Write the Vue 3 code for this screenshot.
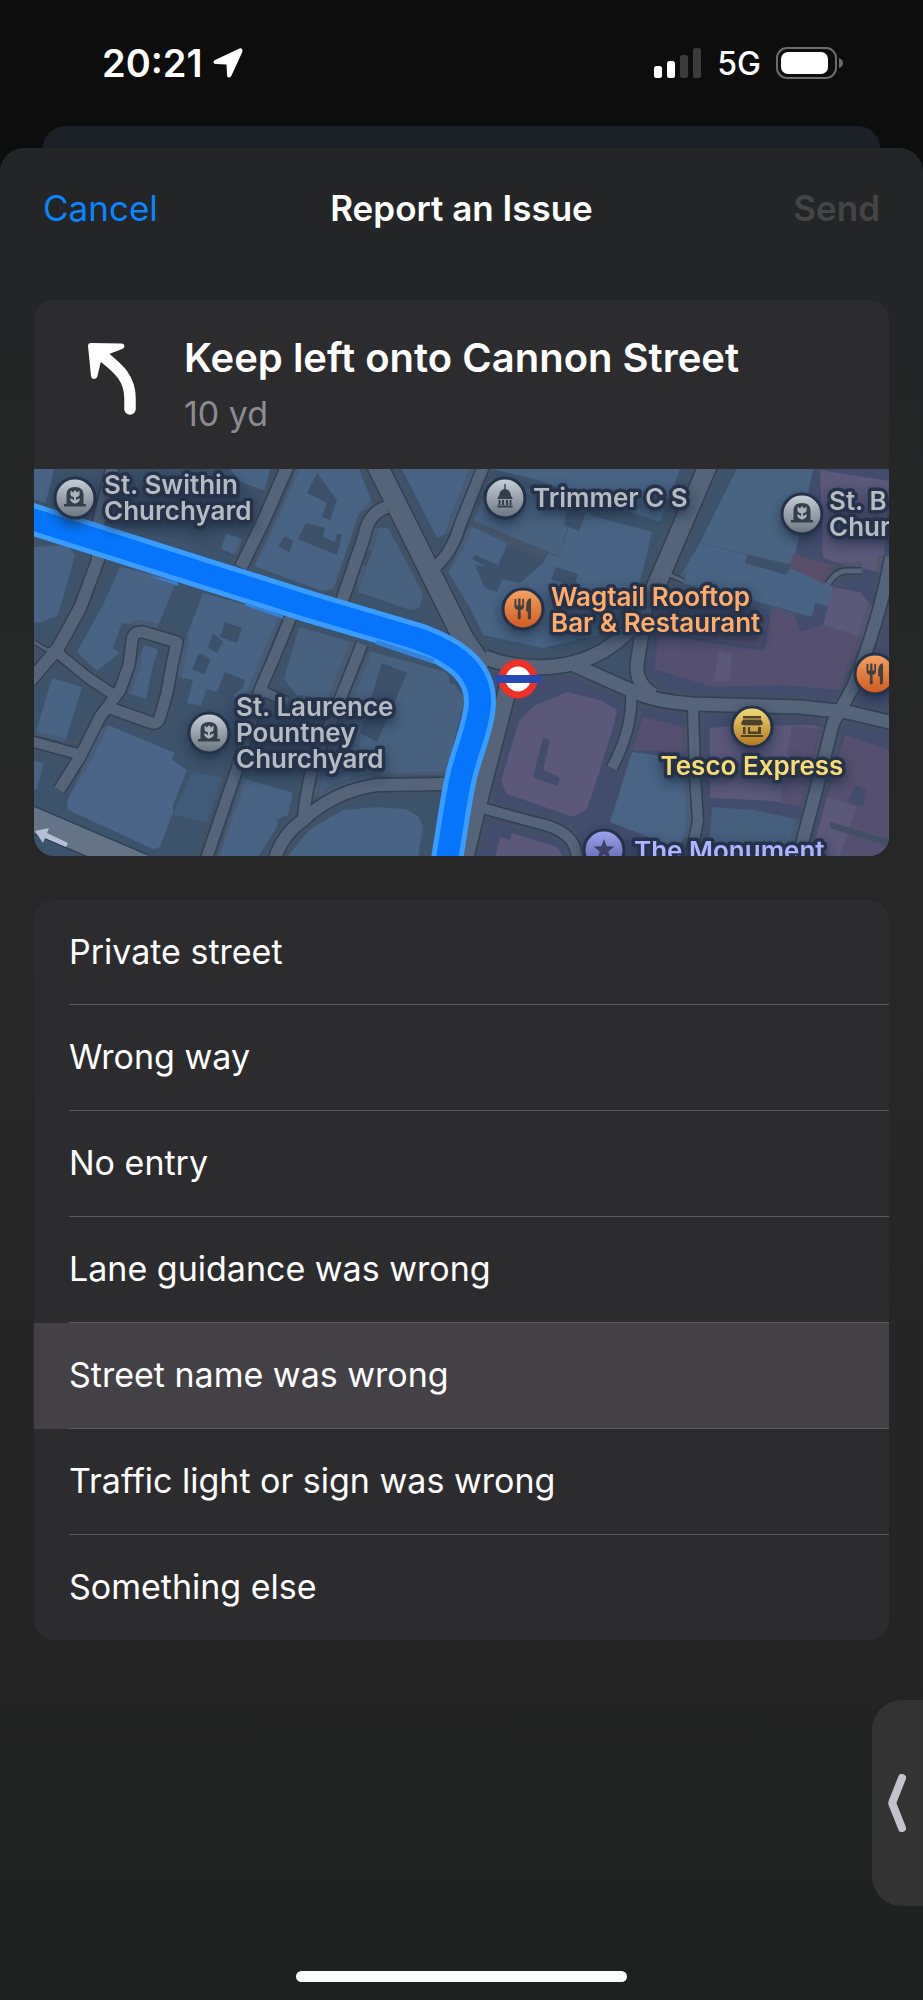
<template>
  <div class="screen">
    <header class="status-bar">
      <div class="status-left">
        <span class="time">20:21</span>
        <svg class="location" viewBox="0 0 30 30" aria-hidden="true">
          <path d="M26.500 .6 L2 12 Q0 13 .5 14.500 Q1 16 3 16 L13.500 16.500 L14 27 Q14 29.500 16 29.500 Q17.500 29.500 18.500 27.500 L29.300 4 Q30 1.500 28.800 .7 Q28 .1 26.500 .6 Z" fill="#fff" />
        </svg>
      </div>
      <div class="status-right">
        <svg class="signal" viewBox="0 0 48 30" aria-hidden="true">
          <rect x="0" y="18" width="8" height="12" rx="2.500" fill="#fff" />
          <rect x="13" y="13" width="8" height="17" rx="2.500" fill="#fff" />
          <rect x="26" y="7" width="8" height="23" rx="2.500" fill="#3b3b3b" />
          <rect x="39" y="0" width="8" height="30" rx="2.500" fill="#3b3b3b" />
        </svg>
        <span class="network">5G</span>
        <svg class="battery" viewBox="0 0 68 32" aria-hidden="true">
          <rect x="1" y="1" width="59" height="30" rx="10" fill="none" stroke="#6b6b6b" stroke-width="2" />
          <rect x="5" y="5" width="47" height="22" rx="7" fill="#fff" />
          <path d="M63 11 Q67 12.500 67 16 Q67 19.500 63 21 Z" fill="#6b6b6b" />
        </svg>
      </div>
    </header>

    <div class="back-sheet"></div>

    <main class="sheet">
      <nav class="nav">
        <button type="button" class="nav-button cancel">Cancel</button>
        <h1 class="title">Report an Issue</h1>
        <button type="button" class="nav-button send" disabled>Send</button>
      </nav>

      <section class="card">
        <div class="maneuver">
          <svg class="turn" viewBox="0 0 50 74" aria-hidden="true">
            <path d="M17 15 C29 25 43 35 43 56 V67" fill="none" stroke="#fff" stroke-width="11.500" stroke-linecap="round" />
            <path d="M4 1 L35 1.500 Q37.500 2 37.500 4.500 Q37 6 35 7 L21 12.500 L13.500 21 L10.500 34 Q9.500 37 7 37 Q4.500 37 4 34 L1 4 Q1 1 4 1 Z" fill="#fff" />
          </svg>
          <div>
            <h2 class="street">Keep left onto Cannon Street</h2>
            <p class="distance">10 yd</p>
          </div>
        </div>

        <svg class="map" viewBox="0 0 855 387" role="img" aria-label="Map of Cannon Street">
          <defs>
            <linearGradient id="silver" x1="0" y1="0" x2="0" y2="1">
              <stop offset="0" stop-color="#c9d1da" />
              <stop offset="1" stop-color="#68737f" />
            </linearGradient>
            <linearGradient id="orange" x1="0" y1="0" x2="0" y2="1">
              <stop offset="0" stop-color="#f4a365" />
              <stop offset="1" stop-color="#cf5820" />
            </linearGradient>
            <linearGradient id="gold" x1="0" y1="0" x2="0" y2="1">
              <stop offset="0" stop-color="#f2dc78" />
              <stop offset="1" stop-color="#ae751c" />
            </linearGradient>
            <linearGradient id="violet" x1="0" y1="0" x2="0" y2="1">
              <stop offset="0" stop-color="#9fa5ee" />
              <stop offset="1" stop-color="#555aa4" />
            </linearGradient>
            <filter id="glow" x="-30%" y="-60%" width="160%" height="240%">
              <feDropShadow dx="0" dy="5" stdDeviation="6" flood-color="#1c2b3f" flood-opacity=".7" />
            </filter>
            <g id="grave" fill="#363f49">
              <path d="M-8.500 6 V-3.500 Q-8.500 -11 0 -11 Q8.500 -11 8.500 -3.500 V6 H11 V8.500 H-11 V6 Z" />
              <path d="M-4.500 -7.500 L-2 -5.500 L0 -8 L2 -5.500 L4.500 -7.500 V-3 Q4 -1 1 -.7 V2.500 Q2 .5 5 .5 Q4.500 4.500 .5 5.500 H-.5 Q-4.500 4.500 -5 .5 Q-2 .5 -1 2.500 V-.7 Q-4 -1 -4.500 -3 Z" fill="#aab3bc" />
            </g>
            <g id="fork" fill="#42403e">
              <path d="M-8.500 -10 V-3 Q-8.500 .3 -5 1 L-5.300 9 Q-5 10.500 -3.700 10.500 Q-2.300 10.500 -2.200 9 L-2.500 1 Q1 .3 1 -3 V-10 H-.7 V-3.500 H-2.500 V-10.500 H-4.800 V-3.500 H-6.700 V-10 Z" />
              <path d="M8 -10.500 V9 Q7.500 10.500 6.200 10.500 Q5 10.500 4.800 9 V2.500 H3.200 Q2.500 -9 6.500 -10.500 Z" />
            </g>
          </defs>

          <rect width="855" height="387" fill="#3d536b" />
          <polygon points="779,0 855,0 855,387 440,387 475,235 500,205 600,215 612,142 700,132 770,150 760,96" fill="#424c6d" />

          <polygon v-for="(shape, i) in buildings" :key="'b' + i" :points="shape[1]" :fill="shape[0]" />

          <g fill="none" stroke-linejoin="round">
            <path v-for="(road, i) in roads" :key="'v' + i" :d="road[1]" :stroke-width="road[0] + 13" stroke="#4b5060" stroke-opacity=".42" />
            <path v-for="(road, i) in roads" :key="'e' + i" :d="road[1]" :stroke-width="road[0] + 3" stroke="#2f4157" />
            <path v-for="(road, i) in roads" :key="'r' + i" :d="road[1]" :stroke-width="road[0]" stroke="#556479" />
            <path d="M-12 346 L110 398" stroke="#2f4157" stroke-width="27" />
            <path d="M-12 346 L110 398" stroke="#657386" stroke-width="24" />
          </g>
          <path d="M1 362 L15 359 L13 364 L34 374 L32 378 L11 369 L9 374 Z" fill="#b5bfd5" />

          <g fill="none" stroke-linejoin="round">
            <path :d="route" stroke="#3b9cff" stroke-width="32" />
            <path :d="route" stroke="#0675fb" stroke-width="22" />
          </g>
          <path d="M112 106 L145 117 L143 113 Z M210 136 L250 150 L248 146 L212 134 Z M341 175 L400 195 L400 190 L343 171 Z" fill="#3582da" />

          <g>
            <circle cx="484" cy="210" r="16" fill="#fff" stroke="#ee3026" stroke-width="7" />
            <rect x="461" y="206" width="46" height="8" fill="#254ab4" />
          </g>

          <g v-for="(pin, i) in pins" :key="'p' + i" :transform="`translate(${pin.x} ${pin.y})`">
            <circle r="20" :fill="`url(#${pin.tone})`" stroke="#26324a" stroke-width="3" filter="url(#glow)" />
            <use v-if="pin.icon === 'grave'" href="#grave" />
            <use v-if="pin.icon === 'fork'" href="#fork" />
            <g v-if="pin.icon === 'capitol'" fill="#363f49">
              <path d="M-.7 -14 H.7 V-9 Q5.500 -8 6 -2 L7.500 0 V1 H-7.500 V0 L-6 -2 Q-5.500 -8 -.7 -9 Z" />
              <path d="M-6.500 2 H-4.500 V7 H-6.500 Z M-3 2 H-1 V7 H-3 Z M1 2 H3 V7 H1 Z M4.500 2 H6.500 V7 H4.500 Z M-7.500 7.500 H7.500 V9.500 H-7.500 Z" />
            </g>
            <g v-if="pin.icon === 'shop'" fill="#4b412c">
              <path d="M-9 -11 H9 V-8.500 H-9 Z M-9 -7.500 H9 L11 -3.500 Q10.500 -1.500 8.500 -2 Q6 -1 4 -2 Q2 -1 0 -2 Q-2 -1 -4 -2 Q-6 -1 -8.500 -2 Q-10.500 -1.500 -11 -3.500 Z" />
              <path d="M-9 0 H-6.500 V7 H-9 Z M-4 0 H-2 V4.500 H6 V0 H9 V7 H-4 Z M-11 8 H11 V10 H-11 Z" />
            </g>
            <path v-if="pin.icon === 'star'" d="M0 -11 L2.700 -3.700 L10.500 -3.400 L4.300 1.400 L6.500 9 L0 4.600 L-6.500 9 L-4.300 1.400 L-10.500 -3.400 L-2.700 -3.700 Z" fill="#3c4267" />
          </g>

          <g class="labels" filter="url(#glow)">
            <text v-for="(label, i) in labels" :key="'l' + i" :x="label.x" :y="label.y" :fill="label.color" :text-anchor="label.anchor || 'start'">
              <tspan v-for="(line, n) in label.lines" :key="n" :x="label.x" :dy="n ? 26 : 0">{{ line }}</tspan>
            </text>
          </g>
        </svg>
      </section>

      <ul class="issues">
        <li v-for="issue in issues" :key="issue" :class="{ selected: issue === selected }">
          <button type="button" class="issue" @click="selected = issue">{{ issue }}</button>
        </li>
      </ul>

      <div class="home-indicator"></div>
    </main>

    <button type="button" class="side-tab" aria-label="Show">
      <svg viewBox="0 0 18 58" aria-hidden="true">
        <path d="M14 4 L4.500 28 Q4 29 4.500 30 L14 54" fill="none" stroke="#c4c2ca" stroke-width="8" stroke-linecap="round" stroke-linejoin="round" />
      </svg>
    </button>
  </div>
</template>

<script setup>
import { ref } from 'vue';

const issues = [
  'Private street',
  'Wrong way',
  'No entry',
  'Lane guidance was wrong',
  'Street name was wrong',
  'Traffic light or sign was wrong',
  'Something else'
];

const selected = ref('Street name was wrong');

const blue = '#486383';
const dark = '#3c5069';
const purple = '#5b587a';
const mauve = '#55506f';

const buildings = [
  [blue, '0,0 20,0 12,34 0,30'],
  [dark, '86,0 196,0 246,22 212,90 150,72 70,54'],
  [blue, '196,0 236,0 231,22 207,13'],
  [blue, '192,64 208,70 203,87 187,80'],
  [blue, '0,78 33,76 41,86 24,146 6,154 0,153'],
  [blue, '86,98 143,111 123,159 88,154 79,179 86,184 63,202 43,183 69,136'],
  [blue, '169,124 249,146 229,196 216,226 203,228 172,220 167,237 153,234 159,211 143,208 143,192'],
  [dark, '191,153 208,159 203,174 186,168'],
  [dark, '179,164 189,173 183,184 174,179'],
  [dark, '165,184 177,190 170,206 158,200'],
  [dark, '191,203 211,211 209,218 196,229 183,223'],
  [blue, '110,176 124,180 118,200 112,230 94,224 104,190'],
  [blue, '18,209 48,218 31,273 1,266'],
  [blue, '0,292 10,294 3,320 0,322'],
  ['#4a6587', '74,256 141,284 138,291 153,301 139,336 139,343 126,378 119,380 34,341 33,333 66,261'],
  ['#405b7a', '158,303 189,309 174,354 139,346'],
  [blue, '209,309 259,324 254,346 243,350 243,358 224,388 183,388'],
  [blue, '253,388 276,360 309,341 343,338 372,340 384,347 389,358 384,388'],
  ['#48617f', '265,158 325,175 303,230 263,226 250,210'],
  ['#48617f', '335,182 412,203 431,230 411,306 343,306 276,331 286,290 310,240'],
  [dark, '348,194 373,204 343,273 326,264'],
  [dark, '416,202 424,208 424,216 415,214'],
  [blue, '262,0 325,0 339,36 325,45 300,120 288,122 220,97 246,40'],
  [dark, '283,4 303,31 296,51 288,48 293,34 273,24'],
  [dark, '272,54 291,59 289,68 301,73 303,64 308,66 303,86 264,70'],
  [dark, '251,67 259,72 255,83 244,77'],
  ['#48617f', '339,59 354,59 389,124 386,139 376,141 324,123 323,106 336,76'],
  [dark, '334,80 338,82 332,97 326,96'],
  [blue, '368,0 443,0 416,63 403,69'],
  [blue, '458,0 646,0 626,53 500,10'],
  ['#48617f', '456,10 500,22 540,30 526,88 439,53'],
  [blue, '541,34 558,47 618,63 606,113 580,150 563,166 509,179 449,166 436,139 414,103 436,56 474,74 526,88'],
  [dark, '474,74 514,83 510,93 486,114 468,110 463,123 451,119 441,96 463,99'],
  [dark, '438,90 441,86 464,96 461,102'],
  [dark, '522,98 544,105 540,117 517,110'],
  [dark, '534,36 552,44 545,62 530,56'],
  ['#455468', '438,51 514,83 508,92 505,90 437,57'],
  ['#496482', '703,0 779,0 759,96 666,74'],
  [blue, '666,74 714,86 756,99 799,116 796,138 781,134 778,148 699,126 643,113'],
  [dark, '714,86 756,99 752,106 711,94'],
  ['#594e6a', '759,85 802,97 790,115 756,98'],
  [purple, '786,1 855,12 849,104 800,93 789,89'],
  [purple, '799,118 826,123 838,138 829,169 789,156'],
  [mauve, '738,138 760,144 766,163 789,156 829,169 806,221 749,216 679,218 620,200 625,165 730,182'],
  ['#514f6e', '626,143 700,146 733,156 726,178 629,164'],
  [purple, '685,182 698,186 696,212 680,212'],
  [purple, '533,223 566,231 583,241 580,255 566,301 553,340 539,348 473,325 467,312 485,252 500,237'],
  ['#424c6d', '509,269 516,271 509,301 526,309 523,317 499,308'],
  [purple, '466,368 476,371 478,364 523,378 529,388 461,388'],
  [mauve, '609,248 653,259 653,284 598,281'],
  ['#4a6485', '598,283 656,291 658,364 640,378 576,353'],
  [purple, '676,259 700,257 779,256 793,261 771,339 740,332 676,329'],
  ['#554f70', '758,257 793,261 771,339 746,333'],
  ['#465f7d', '678,338 720,341 766,351 758,388 674,388'],
  [mauve, '811,266 856,281 856,388 776,388 793,328'],
  [purple, '793,328 822,338 806,388 776,388'],
  ['#424c6d', '821,316 833,321 829,338 814,333'],
  ['#414f64', '796,353 856,371 856,378 796,359']
];

// [width, path]
const roads = [
  [3, 'M0 173 L13 181 L18 180'],
  [10, 'M24 184 L53 208 L80 226'],
  [11, 'M76 239 L118 254 Q124 255 126 248 L133 224 L138 196 L143 173 L109 163 Q99 162 98 172 L95 196 L86 221 L66 248 L46 288 L25 321'],
  [10, 'M-4 272 L44 285'],
  [12, 'M79 -4 L63 60 L64 91 L46 139 L24 179 L-4 212'],
  [12, 'M254 -4 L229 53 L207 98'],
  [11, 'M258 145 L239 191 L226 221 L203 300 L171 394'],
  [9, 'M226 221 L253 233'],
  [11, 'M328 175 L303 238 L281 290 Q272 320 269 352'],
  [12, 'M240 392 Q248 366 268 352 Q300 322 343 316 L412 315'],
  [12, 'M353 38 Q334 44 330 68 L308 132'],
  [11, 'M450 -4 L426 56 Q418 84 400 99'],
  [20, 'M342 -6 L429 169 L450 200'],
  [17, 'M477 205 L470 234 L443 338 L430 392'],
  [14, 'M450 188 C490 204 540 202 575 178 Q605 158 614 130'],
  [18, 'M675 -6 L614 136'],
  [13, 'M612 136 L603 196 Q602 216 620 226'],
  [13, 'M540 196 L603 224 Q625 233 659 235 L766 238 L813 243 L860 254'],
  [10, 'M448 339 L503 354 Q544 362 543 392'],
  [10, 'M597 226 Q599 258 578 299'],
  [10, 'M659 238 L661 308 L664 351 L658 382'],
  [12, 'M857 88 Q846 150 819 218 L799 254 L783 318 L764 390'],
  [5, 'M794 115 Q802 102 812 102 L828 102'],
  [3, 'M636 106 L650 112']
];

const route = 'M-12 47 L276 138 L381 169 C425 184 446 204 446 232 C446 255 432 285 427 308 C421 335 418 362 412 396';

const pins = [
  { x: 41, y: 29, icon: 'grave', tone: 'silver' },
  { x: 175, y: 264, icon: 'grave', tone: 'silver' },
  { x: 768, y: 45, icon: 'grave', tone: 'silver' },
  { x: 471, y: 29, icon: 'capitol', tone: 'silver' },
  { x: 489, y: 140, icon: 'fork', tone: 'orange' },
  { x: 841, y: 205, icon: 'fork', tone: 'orange' },
  { x: 718, y: 258, icon: 'shop', tone: 'gold' },
  { x: 570, y: 381, icon: 'star', tone: 'violet' }
];

const labels = [
  { x: 70, y: 25, color: '#b4bbc2', lines: ['St. Swithin', 'Churchyard'] },
  { x: 499, y: 38, color: '#b4bbc2', lines: ['Trimmer C S'] },
  { x: 795, y: 41, color: '#b4bbc2', lines: ['St. B', 'Churchyard'] },
  { x: 517, y: 137, color: '#ffac6b', lines: ['Wagtail Rooftop', 'Bar & Restaurant'] },
  { x: 202, y: 247, color: '#b4bbc2', lines: ['St. Laurence', 'Pountney', 'Churchyard'] },
  { x: 718, y: 306, color: '#f7dc73', anchor: 'middle', lines: ['Tesco Express'] },
  { x: 600, y: 391, color: '#aeb4ff', lines: ['The Monument'] }
];
</script>

<style>
body {
  margin: 0;
  background: #0d0d0d;
}
</style>

<style scoped>
.screen {
  position: relative;
  display: flex;
  flex-direction: column;
  min-height: 100vh;
  overflow: hidden;
  background: #0d0d0d;
  color: #fff;
  font-family: Inter, "Liberation Sans", sans-serif;
}

.status-bar {
  display: flex;
  justify-content: space-between;
  align-items: center;
  height: 126px;
  padding: 0 79px 0 102px;
}

.status-left,
.status-right {
  display: flex;
  align-items: center;
}

.status-left {
  gap: 10px;
}

.status-right {
  gap: 15px;
}

.time {
  font-size: 38px;
  font-weight: 600;
}

.network {
  font-size: 32px;
  font-weight: 500;
}

.location {
  width: 30px;
  height: 30px;
}

.signal {
  width: 48px;
  height: 30px;
}

.battery {
  width: 68px;
  height: 32px;
}

.back-sheet {
  height: 22px;
  margin: 0 43px;
  border-radius: 22px 22px 0 0;
  background: #1c2128;
}

.sheet {
  flex: 1;
  display: flex;
  flex-direction: column;
  padding: 0 34px;
  border-radius: 24px 24px 0 0;
  background: linear-gradient(#242526, #262726 40%, #252525 75%, #1f2020);
}

.nav {
  display: grid;
  grid-template-columns: 1fr auto 1fr;
  align-items: center;
  height: 120px;
  margin-bottom: 32px;
  padding: 0 9px;
}

.title {
  margin: 0;
  font-size: 35px;
  font-weight: 600;
}

.nav-button {
  padding: 0;
  border: 0;
  background: none;
  font-family: inherit;
  font-size: 35px;
}

.cancel {
  justify-self: start;
  color: #0a84ff;
}

.send {
  justify-self: end;
  color: #454547;
  font-weight: 600;
}

.card {
  overflow: hidden;
  border-radius: 20px;
  background: #2c2c2e;
}

.maneuver {
  display: flex;
  align-items: flex-start;
  gap: 47px;
  height: 169px;
  padding: 42px 53px 0;
  box-sizing: border-box;
}

.turn {
  width: 50px;
  height: 74px;
}

.street {
  margin: -12px 0 0;
  font-size: 40px;
  font-weight: 600;
  line-height: 56px;
}

.distance {
  margin: 0;
  color: #8b8b90;
  font-size: 34px;
  line-height: 56px;
}

.map {
  display: block;
  width: 100%;
  height: auto;
}

.labels text {
  font-size: 26px;
  font-weight: 600;
  stroke: #26324a;
  stroke-width: 7px;
  stroke-linejoin: round;
  paint-order: stroke;
}

.issues {
  margin: 44px 0 0;
  padding: 0;
  overflow: hidden;
  border-radius: 20px;
  background: #2c2c2e;
  list-style: none;
}

.issues li {
  height: 106px;
  padding-left: 35px;
}

.issues li:first-child,
.issues li:last-child {
  height: 105px;
}

.issue {
  display: block;
  width: 100%;
  height: 100%;
  padding: 0 35px 2px 0;
  border: 0;
  border-bottom: 1px solid #59595c;
  background: none;
  color: #fff;
  font-family: inherit;
  font-size: 34px;
  text-align: left;
}

.issues li:last-child .issue {
  border-bottom: 0;
}

.issues .selected {
  background: #444146;
}

.home-indicator {
  width: 331px;
  height: 11px;
  margin: auto auto 18px;
  border-radius: 6px;
  background: #fff;
}

.side-tab {
  position: absolute;
  right: 0;
  bottom: 94px;
  width: 51px;
  height: 206px;
  padding: 0 0 0 16px;
  border: 0;
  border-radius: 30px 0 0 30px;
  background: #333;
  text-align: left;
}

.side-tab svg {
  display: block;
  width: 18px;
  height: 58px;
}
</style>
